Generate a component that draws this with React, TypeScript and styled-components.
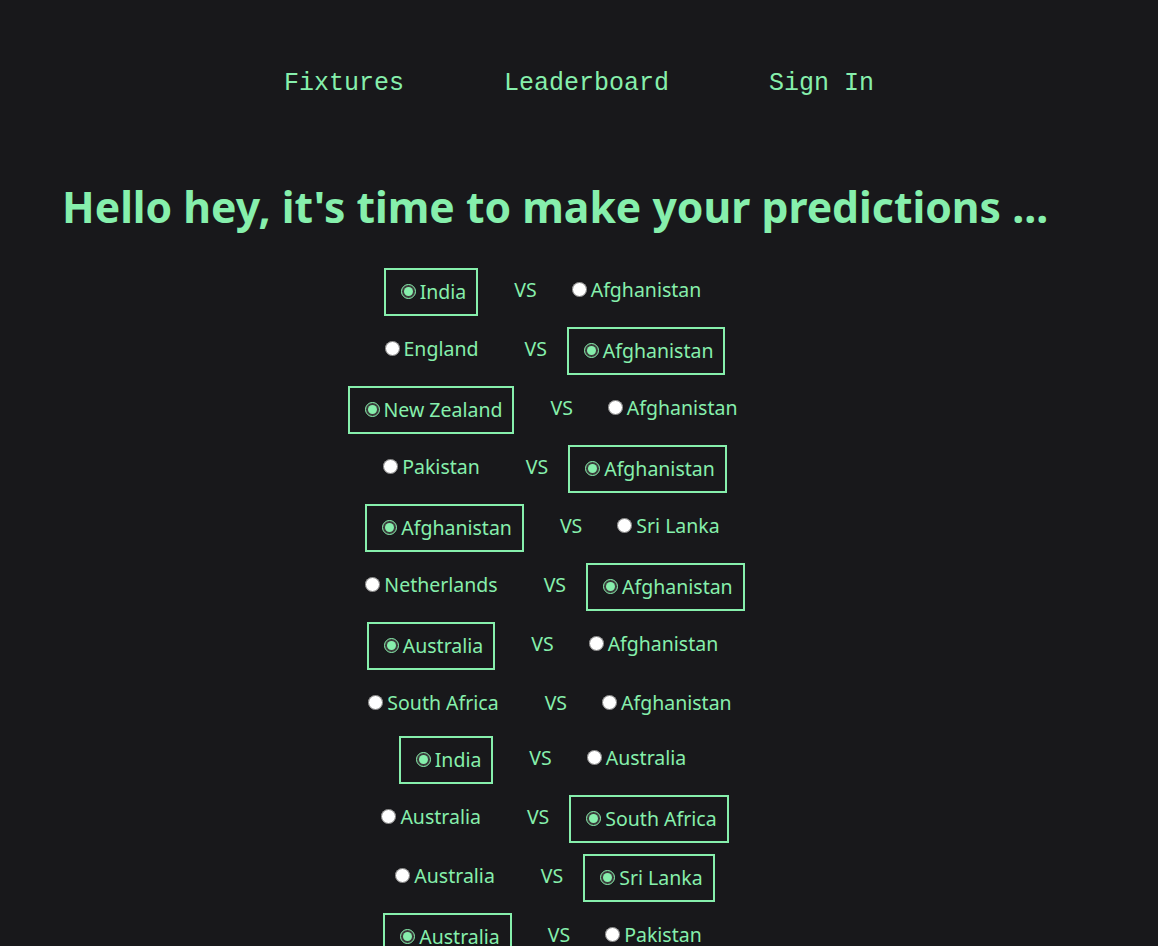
import React from "react";
import styled, { createGlobalStyle } from "styled-components";

const GREEN = "#86efac";
const BG = "#18181b";

const GlobalStyle = createGlobalStyle`
  html, body {
    margin: 0;
    padding: 0;
    background: ${BG};
    color: ${GREEN};
    font-family: "Noto Sans", "Open Sans", sans-serif;
  }
`;

const Page = styled.div`
  min-height: 100vh;
  background: ${BG};
`;

const Nav = styled.nav`
  display: flex;
  justify-content: center;
  gap: 100px;
  padding-top: 70px;
`;

const NavLink = styled.a`
  font-family: "Liberation Mono", "DejaVu Sans Mono", monospace;
  font-size: 25px;
  line-height: 28px;
  color: ${GREEN};
  text-decoration: none;
  cursor: pointer;
`;

const Heading = styled.h1`
  margin: 83px 0 0 62px;
  font-family: "Noto Sans", "Open Sans", sans-serif;
  font-weight: 700;
  font-size: 42.7px;
  line-height: 52px;
  color: ${GREEN};
`;

const Matches = styled.div`
  display: flex;
  flex-direction: column;
  align-items: center;
  gap: 11px;
  margin-top: 35px;
  padding-right: 63px;
`;

const Row = styled.div`
  display: flex;
  align-items: flex-start;
`;

const TeamLabel = styled.label<{ $selected: boolean }>`
  display: block;
  padding: 10px;
  border: ${(p) => (p.$selected ? `2px solid ${GREEN}` : "none")};
  font-size: 19.5px;
  line-height: 24px;
  white-space: nowrap;
  cursor: pointer;
`;

const Radio = styled.input`
  accent-color: ${GREEN};
  width: 15px;
  height: 15px;
  margin: 3px 4px 0 5px;
`;

const Versus = styled.span`
  padding: 10px 0;
  margin: 0 20px 0 36px;
  font-size: 19.5px;
  line-height: 24px;
`;

type Match = { home: string; away: string; pick: "home" | "away" | null };

const matches: Match[] = [
  { home: "India", away: "Afghanistan", pick: "home" },
  { home: "England", away: "Afghanistan", pick: "away" },
  { home: "New Zealand", away: "Afghanistan", pick: "home" },
  { home: "Pakistan", away: "Afghanistan", pick: "away" },
  { home: "Afghanistan", away: "Sri Lanka", pick: "home" },
  { home: "Netherlands", away: "Afghanistan", pick: "away" },
  { home: "Australia", away: "Afghanistan", pick: "home" },
  { home: "South Africa", away: "Afghanistan", pick: null },
  { home: "India", away: "Australia", pick: "home" },
  { home: "Australia", away: "South Africa", pick: "away" },
  { home: "Australia", away: "Sri Lanka", pick: "away" },
  { home: "Australia", away: "Pakistan", pick: "home" },
];

function Team({
  name,
  group,
  selected,
}: {
  name: string;
  group: string;
  selected: boolean;
}) {
  return (
    <TeamLabel $selected={selected}>
      <Radio type="radio" name={group} value={name} defaultChecked={selected} />
      {name}
    </TeamLabel>
  );
}

export default function App() {
  return (
    <Page>
      <GlobalStyle />
      <Nav>
        <NavLink>Fixtures</NavLink>
        <NavLink>Leaderboard</NavLink>
        <NavLink>Sign In</NavLink>
      </Nav>
      <Heading>Hello hey, it's time to make your predictions ...</Heading>
      <Matches>
        {matches.map((m, i) => (
          <Row key={i}>
            <Team name={m.home} group={`match-${i}`} selected={m.pick === "home"} />
            <Versus>VS</Versus>
            <Team name={m.away} group={`match-${i}`} selected={m.pick === "away"} />
          </Row>
        ))}
      </Matches>
    </Page>
  );
}
